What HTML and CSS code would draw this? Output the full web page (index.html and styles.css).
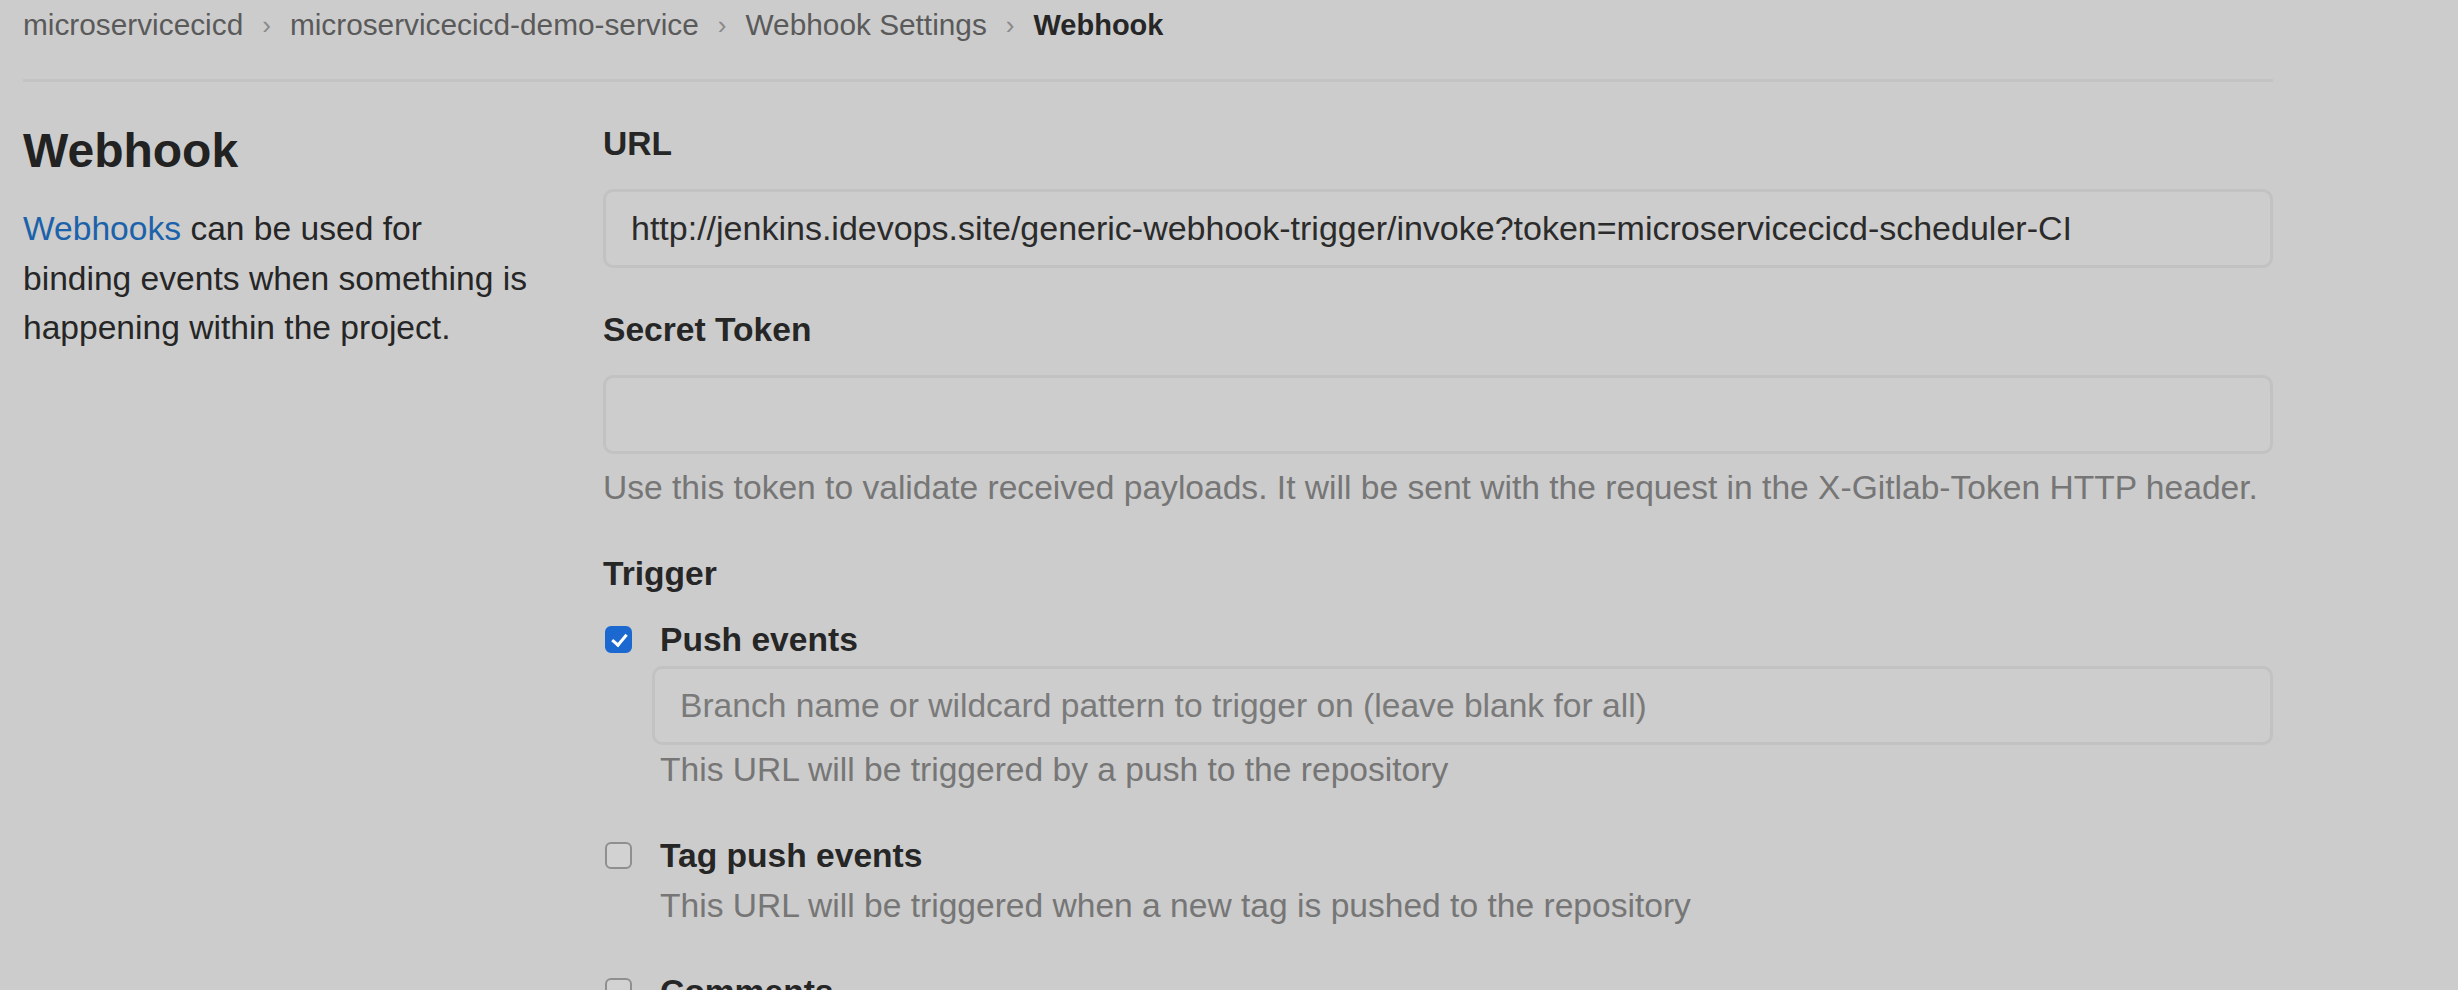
FILE: index.html
```html
<!DOCTYPE html>
<html lang="en">
  <head>
    <meta charset="UTF-8" />
    <title>Webhook Settings</title>
    <link rel="stylesheet" href="styles.css">
  </head>
  <body>
    <div class="page">
      <div class="top-bar">
        <ul class="breadcrumbs">
          <li><a href="#">microservicecicd</a></li>
          <li class="sep">&rsaquo;</li>
          <li><a href="#">microservicecicd-demo-service</a></li>
          <li class="sep">&rsaquo;</li>
          <li><a href="#">Webhook Settings</a></li>
          <li class="sep">&rsaquo;</li>
          <li class="current">Webhook</li>
        </ul>
      </div>

      <div class="settings">
        <div class="settings-intro">
          <h4>Webhook</h4>
          <p>
            <a href="#">Webhooks</a> can be used for binding events when
            something is happening within the project.
          </p>
        </div>

        <form class="settings-form">
          <div class="form-group">
            <label class="label-bold">URL</label>
            <input class="form-control url-input" type="text"
              value="http://jenkins.idevops.site/generic-webhook-trigger/invoke?token=microservicecicd-scheduler-CI" />
          </div>

          <div class="form-group">
            <label class="label-bold">Secret Token</label>
            <input class="form-control" type="text" />
            <p class="form-text">
              Use this token to validate received payloads. It will be sent with the request in the X-Gitlab-Token HTTP header.
            </p>
          </div>

          <div class="form-group">
            <label class="label-bold trigger-label">Trigger</label>
            <ul class="trigger-list">
              <li class="form-check">
                <span class="check checked"></span>
                <label class="label-bold">Push events</label>
                <input class="form-control" type="text"
                  placeholder="Branch name or wildcard pattern to trigger on (leave blank for all)" />
                <p class="form-text">This URL will be triggered by a push to the repository</p>
              </li>
              <li class="form-check">
                <span class="check"></span>
                <label class="label-bold">Tag push events</label>
                <p class="form-text">This URL will be triggered when a new tag is pushed to the repository</p>
              </li>
              <li class="form-check">
                <span class="check"></span>
                <label class="label-bold">Comments</label>
                <p class="form-text">This URL will be triggered when someone adds a comment</p>
              </li>
            </ul>
          </div>
        </form>
      </div>
    </div>
  </body>
</html>
```

FILE: styles.css
```css
body {
  margin: 0;
  padding: 0;
  background-color: #cccccc; /* page is dimmed by an overlay */
  font-family: "Liberation Sans", Arial, sans-serif;
  font-size: 33.6px;
  line-height: 48px;
  color: #262626;
  overflow: hidden;
}
a {
  color: #1b62aa;
  text-decoration: none;
}

.page {
  width: 2250px;
  margin-left: 23px;
}

.top-bar {
  height: 79px;
  border-bottom: 3px solid #c3c3c3;
}
.breadcrumbs {
  display: flex;
  align-items: center;
  height: 50px;
  margin: 0;
  padding: 0;
  list-style: none;
  font-size: 29.8px;
}
.breadcrumbs a {
  color: #5a5a5a;
}
.breadcrumbs .sep {
  color: #8a8a8a;
  font-size: 26px;
  margin: 0 19px;
}
.breadcrumbs .current {
  color: #262626;
  font-weight: bold;
  font-size: 29px;
}

.settings {
  display: grid;
  grid-template-columns: 580px 1fr;
  padding-top: 38px;
}
.settings-intro h4 {
  margin: 2px 0 24px 0;
  font-size: 48px;
  line-height: 58px;
  font-weight: bold;
  color: #222;
}
.settings-intro p {
  margin: 0;
  width: 508px;
  line-height: 49.5px;
}

.settings-form {
  margin: 0;
}
.form-group {
  margin-bottom: 38px;
}
.label-bold {
  display: block;
  font-weight: bold;
  margin-bottom: 21px;
}
.trigger-label {
  margin-bottom: 18px;
}
.form-control {
  display: block;
  box-sizing: border-box;
  width: 100%;
  height: 79px;
  margin: 0;
  padding: 0 25px;
  font-family: inherit;
  font-size: 33.6px;
  color: #2b2b2b;
  background: #cdcdcd;
  border: 3px solid #c2c2c2;
  border-radius: 10px;
  outline: none;
}
.url-input {
  font-size: 34px;
}
.form-control::placeholder {
  color: #7a7a7a;
}
.form-text {
  margin: 10px 0 0 0;
  color: #767676;
}

.trigger-list {
  margin: 0;
  padding: 0;
  list-style: none;
}
.form-check {
  position: relative;
  padding-left: 49px;
  margin-bottom: 38px;
}
.form-check .label-bold {
  margin: 0 0 2px 8px;
}
.form-check .form-text {
  margin: 1px 0 0 8px;
}
.check {
  position: absolute;
  left: 2px;
  top: 10px;
  width: 27px;
  height: 27px;
  box-sizing: border-box;
  border: 2px solid #8f8f8f;
  border-radius: 6px;
  background: #d2d2d2;
}
.check.checked {
  background: #1a68d0;
  border-color: #1a68d0;
}
.check.checked::after {
  content: "";
  position: absolute;
  left: 8px;
  top: 3px;
  width: 6px;
  height: 12px;
  border: solid #fff;
  border-width: 0 3px 3px 0;
  transform: rotate(40deg);
}
```
